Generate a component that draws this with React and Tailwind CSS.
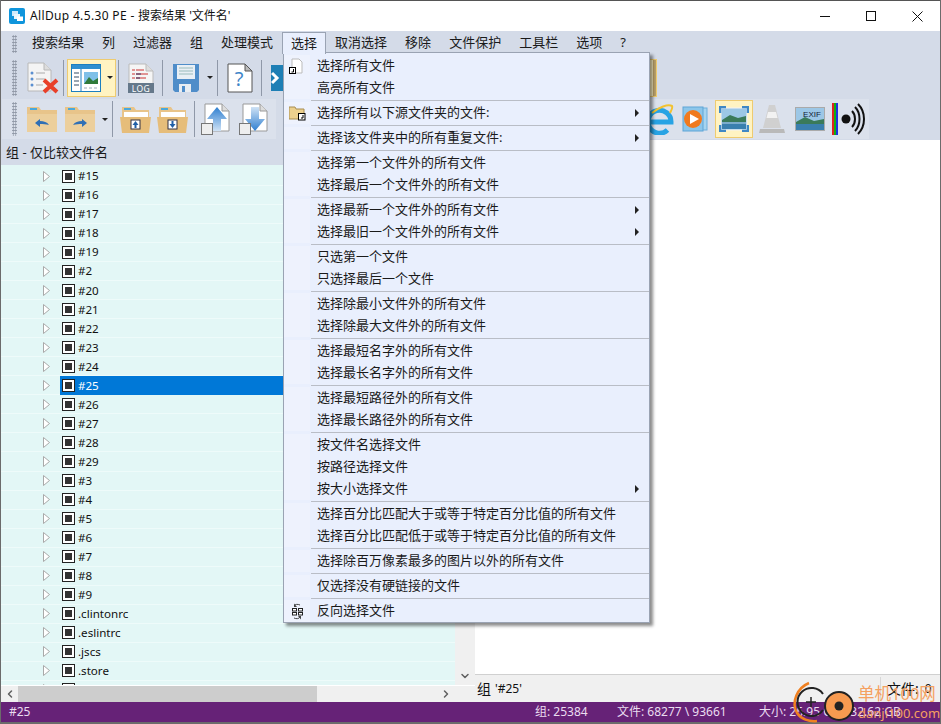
import React from "react";
import { ChevronDown, ChevronLeft, ChevronRight } from "lucide-react";

const FONT = { fontFamily: '"Noto Sans", "Noto Sans CJK SC", sans-serif' };

const menuItems = ["搜索结果", "列", "过滤器", "组", "处理模式", "选择", "取消选择", "移除", "文件保护", "工具栏", "选项", "?"];

const treeRows = [
  "#15", "#16", "#17", "#18", "#19", "#2", "#20", "#21", "#22", "#23", "#24", "#25", "#26", "#27", "#28", "#29",
  "#3", "#4", "#5", "#6", "#7", "#8", "#9", ".clintonrc", ".eslintrc", ".jscs", ".store", "",
];

const menuGroups = [
  [{ t: "选择所有文件", icon: "file" }, { t: "高亮所有文件" }],
  [{ t: "选择所有以下源文件夹的文件:", arrow: true, icon: "folder" }],
  [{ t: "选择该文件夹中的所有重复文件:", arrow: true }],
  [{ t: "选择第一个文件外的所有文件" }, { t: "选择最后一个文件外的所有文件" }],
  [{ t: "选择最新一个文件外的所有文件", arrow: true }, { t: "选择最旧一个文件外的所有文件", arrow: true }],
  [{ t: "只选第一个文件" }, { t: "只选择最后一个文件" }],
  [{ t: "选择除最小文件外的所有文件" }, { t: "选择除最大文件外的所有文件" }],
  [{ t: "选择最短名字外的所有文件" }, { t: "选择最长名字外的所有文件" }],
  [{ t: "选择最短路径外的所有文件" }, { t: "选择最长路径外的所有文件" }],
  [{ t: "按文件名选择文件" }, { t: "按路径选择文件" }, { t: "按大小选择文件", arrow: true }],
  [{ t: "选择百分比匹配大于或等于特定百分比值的所有文件" }, { t: "选择百分比匹配低于或等于特定百分比值的所有文件" }],
  [{ t: "选择除百万像素最多的图片以外的所有文件" }],
  [{ t: "仅选择没有硬链接的文件" }],
  [{ t: "反向选择文件", icon: "invert" }],
];

function Grip({ h = "h-[26px]" }) {
  return (
    <div className={`w-[5px] shrink-0 ${h} bg-[radial-gradient(#8c94a3_0.8px,transparent_1px)] bg-[length:2.5px_3px]`} />
  );
}

function Sep({ className = "" }) {
  return <div className={`h-[36px] w-px shrink-0 bg-[#8f98a8] ${className}`} />;
}

function Caret() {
  return <div className="h-0 w-0 shrink-0 border-x-[3px] border-t-[3px] border-x-transparent border-t-[#222]" />;
}

function AppLogo() {
  return (
    <svg width="16" height="16" viewBox="0 0 16 16">
      <rect width="16" height="16" rx="2" fill="#0f95dc" />
      <rect x="3" y="3" width="6" height="5" fill="#cfeafa" />
      <rect x="5" y="6" width="6" height="5" fill="#e8f6fd" />
      <rect x="8" y="8.5" width="6" height="4.5" fill="#fff" />
    </svg>
  );
}

function ReportDelete() {
  return (
    <svg width="32" height="32" viewBox="0 0 32 32" className="shrink-0">
      <path d="M1 1h16l7 7v21H1z" fill="#f4f4f4" stroke="#b8b8b8" />
      <path d="M17 1v7h7" fill="#ddd" stroke="#b8b8b8" />
      <g fill="#5b8fd0">
        <circle cx="5" cy="11" r="1.5" /><circle cx="5" cy="17" r="1.5" /><circle cx="5" cy="23" r="1.5" />
      </g>
      <path d="M9 11h9M9 17h9M9 23h7" stroke="#aaa" />
      <path d="M17 18l13 12M30 18L17 30" stroke="#e8402a" strokeWidth="4" />
    </svg>
  );
}

function ViewPanes() {
  return (
    <svg width="30" height="28" viewBox="0 0 30 28" className="shrink-0">
      <rect x="0.5" y="0.5" width="29" height="27" fill="#fff" stroke="#1c7fc0" />
      <rect x="1" y="1" width="28" height="4" fill="#2f8fd0" />
      <path d="M10 5v22" stroke="#1c7fc0" />
      <path d="M3 9h5M3 13h5M3 17h5M3 21h5" stroke="#7a8a9a" strokeWidth="1.5" />
      <rect x="13" y="8" width="14" height="12" fill="#7fc0e8" />
      <path d="M13 20l5-7 4 4 5-3v6z" fill="#2f7a3a" />
      <path d="M13 24h14" stroke="#9ab" strokeDasharray="3 2" />
    </svg>
  );
}

function LogDoc() {
  return (
    <svg width="26" height="30" viewBox="0 0 26 30" className="shrink-0">
      <path d="M1 1h17l7 7v21H1z" fill="#f5f5f5" stroke="#bbb" />
      <path d="M18 1v7h7" fill="#ddd" stroke="#bbb" />
      <path d="M4 7h3M8 7h8M4 11h3M8 11h12M4 15h3M8 15h10" stroke="#c33" />
      <path d="M8 11h5M8 15h4" stroke="#336" />
      <rect x="0" y="20" width="26" height="10" fill="#65788a" />
      <text x="13" y="28.5" textAnchor="middle" fontSize="8.5" fill="#fff" letterSpacing="0.5">LOG</text>
    </svg>
  );
}

function Floppy() {
  return (
    <svg width="28" height="28" viewBox="0 0 28 28" className="shrink-0">
      <path d="M1 0h26v26l-2 2H3l-2-2z" fill="#4f8dc9" />
      <rect x="5" y="1" width="18" height="14" fill="#e9eff5" />
      <path d="M7 4h14M7 7h14M7 10h14" stroke="#9bb" />
      <rect x="7" y="20" width="12" height="8" fill="#e8edf2" />
      <rect x="10" y="22" width="3" height="6" fill="#4f8dc9" />
    </svg>
  );
}

function HelpDoc() {
  return (
    <svg width="26" height="30" viewBox="0 0 26 30" className="shrink-0">
      <path d="M1 1h17l7 7v21H1z" fill="#fff" stroke="#555" />
      <path d="M18 1v7h7z" fill="#bbb" stroke="#555" />
      <text x="12" y="23" textAnchor="middle" fontSize="20" fill="#3f86c8">?</text>
    </svg>
  );
}

function BlueTile() {
  return (
    <svg width="12" height="26" viewBox="0 0 12 26" className="shrink-0">
      <path d="M0 0h12v26H0z" fill="#1e7fb5" />
      <path d="M1 8l5 5-5 5" stroke="#fff" strokeWidth="3" fill="none" />
    </svg>
  );
}

function FolderArrow({ dir }) {
  return (
    <svg width="30" height="26" viewBox="0 0 30 26" className="shrink-0">
      <path d="M0 1h12l2 3h16v22H0z" fill="#e8c48a" />
      <rect x="3" y="2" width="7" height="2" fill="#4aa8dc" />
      <path d="M0 8h30v18H0z" fill="#eccf9c" />
      {dir === "back" ? (
        <path d="M8 17l5-4v2c4 0 7 1 9 4-3-1-6-1-9-1v3z" fill="#2f6fb5" />
      ) : (
        <path d="M22 17l-5-4v2c-4 0-7 1-9 4 3-1 6-1 9-1v3z" fill="#2f6fb5" />
      )}
    </svg>
  );
}

function FolderBox({ up }) {
  return (
    <svg width="31" height="27" viewBox="0 0 31 27" className="shrink-0">
      <path d="M2 1h12l2 3h13v8H2z" fill="#e8c48a" />
      <rect x="4" y="2" width="7" height="2" fill="#4aa8dc" />
      <rect x="4" y="6" width="24" height="5" fill="#fff" />
      <path d="M0 11h31l-2 16H2z" fill="#e6bd7a" />
      <rect x="11" y="14" width="9" height="9" fill="#fff" stroke="#334" />
      <path d={up ? "M15.5 15l3 4h-2v3h-2v-3h-2z" : "M15.5 22l3-4h-2v-3h-2v3h-2z"} fill="#1f5fa8" />
    </svg>
  );
}

function DocArrow({ up }) {
  return (
    <svg width="30" height="32" viewBox="0 0 30 32" className="shrink-0">
      <path d="M4 1h17l7 7v20H4z" fill="#fff" stroke="#999" />
      <path d="M21 1v7h7" fill="#ddd" stroke="#999" />
      <defs>
        <linearGradient id={up ? "arrU" : "arrD"} x1="0" y1={up ? "0" : "1"} x2="0" y2={up ? "1" : "0"}>
          <stop offset="0" stopColor="#2f7fd0" />
          <stop offset="1" stopColor="#cfe2f5" />
        </linearGradient>
      </defs>
      <path
        d={up ? "M16 4l10 12h-6v12h-8V16H6z" : "M16 28L26 16h-6V4h-8v12H6z"}
        fill={`url(#${up ? "arrU" : "arrD"})`}
      />
      <rect x="0.5" y="20.5" width="11" height="11" fill="#eee" stroke="#777" />
    </svg>
  );
}

function IeIcon() {
  return (
    <svg width="28" height="31" viewBox="0 0 28 31" className="shrink-0">
      <path d="M3 18h22A11.5 11.5 0 1 0 21.5 26" stroke="#27a3e4" strokeWidth="5" fill="none" />
      <path d="M6 9C13 3 22 0 26 2c1 2-1 5-2 7" stroke="#f2c230" strokeWidth="2" fill="none" />
    </svg>
  );
}

function MediaIcon() {
  return (
    <svg width="26" height="26" viewBox="0 0 26 26" className="shrink-0">
      <rect x="5" y="2" width="20" height="22" fill="#a6d4f0" stroke="#6fb0dc" />
      <rect x="1" y="1" width="20" height="24" fill="#8cc6ea" stroke="#5ea5d6" />
      <circle cx="11" cy="13" r="9" fill="#f07a1e" />
      <path d="M8 8l9 5-9 5z" fill="#fff" />
    </svg>
  );
}

function LandscapeIcon() {
  return (
    <svg width="30" height="26" viewBox="0 0 30 26" className="shrink-0">
      <rect x="2" y="2" width="26" height="22" fill="#9cc7e6" stroke="#f4f4f4" />
      <path d="M3 14l8-5 8 3 8-2v6H3z" fill="#3a7a5a" />
      <path d="M3 16h24v7H3z" fill="#3a7fae" />
      <path d="M3 17h24" stroke="#bcd8e8" />
      <path d="M1 7V1h6M23 1h6v6M1 19v6h6M29 19v6h-6" stroke="#3f88c5" strokeWidth="2.5" fill="none" />
    </svg>
  );
}

function ConeIcon() {
  return (
    <svg width="26" height="30" viewBox="0 0 26 30" className="shrink-0">
      <path d="M10 1h6l6 23H4z" fill="#d0d0d0" />
      <path d="M9 8h8l1.5 6h-11z" fill="#f2f2f2" />
      <path d="M1 25h24l1 4H0z" fill="#b9b9b9" />
    </svg>
  );
}

function ExifIcon() {
  return (
    <svg width="30" height="24" viewBox="0 0 30 24" className="shrink-0">
      <rect x="0.5" y="0.5" width="29" height="23" fill="#9cc7e6" stroke="#aaa" />
      <path d="M1 15l9-5 9 4 10-2v5H1z" fill="#3a7a5a" />
      <path d="M1 17h28v6H1z" fill="#3a7fae" />
      <text x="17" y="10" textAnchor="middle" fontSize="8" fill="#123" fontFamily="Liberation Sans">EXIF</text>
    </svg>
  );
}

function SoundIcon() {
  return (
    <svg width="33" height="32" viewBox="0 0 33 32" className="shrink-0">
      <rect x="0" y="0" width="2" height="32" fill="#e02020" />
      <rect x="2" y="0" width="2" height="32" fill="#10b010" />
      <rect x="4" y="0" width="2" height="32" fill="#2030e0" />
      <circle cx="14" cy="16" r="4.5" fill="#111" />
      <path d="M20 8c4 4 4 12 0 16M23 4c6 6 6 18 0 24M26 1c8 8 8 22 0 30" stroke="#111" strokeWidth="2" fill="none" />
    </svg>
  );
}

function MenuIcon({ type }) {
  if (type === "file") {
    return (
      <svg width="16" height="16" viewBox="0 0 16 16">
        <path d="M3 1h7l3 3v11H3z" fill="#fff" stroke="#bbb" />
        <rect x="0.5" y="9.5" width="6" height="6" fill="#fff" stroke="#000" />
        <path d="M4.5 11v3h-2" stroke="#000" fill="none" />
      </svg>
    );
  }
  if (type === "folder") {
    return (
      <svg width="17" height="16" viewBox="0 0 17 16">
        <path d="M0 2h6l1 2h8v10H0z" fill="#ecd08e" stroke="#a88d50" />
        <rect x="9.5" y="8.5" width="6.5" height="6.5" fill="#fff" stroke="#000" />
        <path d="M14 10v3h-2" stroke="#000" fill="none" />
      </svg>
    );
  }
  return (
    <svg width="13" height="17" viewBox="0 0 13 17">
      <path d="M3 3c1-2 4-2 6-1M9 14c-1 2-4 2-6 1" stroke="#444" fill="none" />
      <path d="M3 0.5v3.5h3zM10 16.500v-3.500H7z" fill="#444" />
      <rect x="1.500" y="5.500" width="4" height="2.500" fill="#fff" stroke="#222" />
      <rect x="7.500" y="5.500" width="4" height="2.500" fill="#fff" stroke="#222" />
      <rect x="1.500" y="9.500" width="4" height="2.500" fill="#fff" stroke="#222" />
      <rect x="7.500" y="9.500" width="4" height="2.500" fill="#fff" stroke="#222" />
    </svg>
  );
}

function SelectMenu() {
  return (
    <div className="absolute left-[282px] top-[52px] w-[367px] border border-[#9aa3b3] bg-[#e9effd] pt-[2px] shadow-[3px_3px_3px_rgba(0,0,0,0.45)]">
      {menuGroups.map((group, i) => (
        <div key={i}>
          {i > 0 && (
            <div className="flex h-[3px] items-center pl-[27px]">
              <div className="h-px flex-1 bg-[#b9bdc6]" />
            </div>
          )}
          {group.map((item) => (
            <div key={item.t} className="flex h-[22px] items-center text-[13px] text-[#1a1a1a]">
              <div className="flex h-full w-[26px] shrink-0 items-center justify-center bg-[#eef2fd]">
                {item.icon && <MenuIcon type={item.icon} />}
              </div>
              <span className="ml-[7px] flex-1 whitespace-nowrap">{item.t}</span>
              {item.arrow && (
                <div className="mr-[10px] h-0 w-0 border-y-[4px] border-l-[4px] border-y-transparent border-l-[#222]" />
              )}
            </div>
          ))}
        </div>
      ))}
    </div>
  );
}

function TreeRow({ name, selected }) {
  return (
    <div className="flex h-[19.04px] shrink-0 items-center border-b border-[#eefbfa] pl-[42px] text-[11.6px]">
      <svg width="7" height="11" viewBox="0 0 7 11" className="shrink-0">
        <path d="M0.5 0.5l6 5-6 5z" fill="#fff" stroke="#a9a9a9" />
      </svg>
      <div className={`ml-[10px] flex h-[19px] flex-1 items-center pl-[2px] ${selected ? "bg-[#0078d7] text-white" : "text-[#111]"}`}>
        <div className="flex h-[13px] w-[13px] items-center justify-center border border-[#222] bg-white">
          <div className="h-[7px] w-[7px] bg-[#333]" />
        </div>
        <span className="ml-[3px]">{name}</span>
      </div>
    </div>
  );
}

function Watermark() {
  return (
    <div className="pointer-events-none absolute bottom-0 left-[790px] h-[44px] w-[150px]">
      <svg width="70" height="44" viewBox="0 0 70 44" className="absolute left-0 top-0">
        <path d="M18 3C6 8 0 22 6 33c4 6 12 9 20 8" stroke="#f08020" strokeWidth="2.5" fill="none" />
        <path d="M32 14A14 14 0 1 0 32 30" fill="none" stroke="#222" strokeWidth="2" />
        <path d="M20 17v10M15 22h10" stroke="#222" strokeWidth="1.5" />
        <circle cx="48" cy="26" r="14" fill="#f79a50" stroke="#222" strokeWidth="2" />
        <circle cx="48" cy="26" r="4.5" fill="#222" />
      </svg>
      <span className="absolute left-[67px] top-[2px] whitespace-nowrap text-[16.5px] leading-[24px] text-[#f5a060]">单机100网</span>
      <span className="absolute left-[67px] top-[24px] whitespace-nowrap text-[13px] leading-[18px] text-[#f5a060]">danji100.com</span>
    </div>
  );
}

export default function App() {
  return (
    <div className="relative flex h-[724px] w-[941px] flex-col overflow-hidden border-x border-[#6b6b6b] bg-white" style={FONT}>
      {/* title bar */}
      <div className="flex h-[31px] shrink-0 items-center border-t border-[#555] bg-white pl-[8px]">
        <AppLogo />
        <span className="ml-[5px] text-[12px] text-[#111]">
          <span className="tracking-[0.34px]">AllDup 4.5.30 PE - </span>搜索结果 '文件名'
        </span>
        <div className="ml-auto flex h-full items-center text-[#111]">
          <div className="flex w-[46px] justify-center"><div className="h-px w-[10px] bg-[#111]" /></div>
          <div className="flex w-[46px] justify-center"><div className="h-[10px] w-[10px] border border-[#111]" /></div>
          <div className="flex w-[46px] justify-center">
            <svg width="11" height="11" viewBox="0 0 11 11"><path d="M0.5 0.5l10 10M10.5 0.5l-10 10" stroke="#111" /></svg>
          </div>
        </div>
      </div>

      {/* menu bar */}
      <div className="flex h-[26px] shrink-0 items-center bg-[#d4dbe8] pl-[11px] text-[13px] text-[#1a1a1a]">
        <Grip h="h-[18px]" />
        <div className="ml-[6px] flex h-full items-center pb-[2px]">
          {menuItems.map((m) =>
            m === "选择" ? (
              <div key={m} className="z-20 flex h-[22px] items-center border border-b-0 border-[#9aa3b3] bg-[#e9effd] px-[8px]">{m}</div>
            ) : (
              <div key={m} className="px-[9px]">{m}</div>
            )
          )}
        </div>
      </div>

      {/* toolbar 1 */}
      <div className="flex h-[41px] shrink-0 items-center bg-[#d4dbe8] pl-[11px]">
        <Grip h="h-[36px]" />
        <div className="ml-[10px]"><ReportDelete /></div>
        <Sep className="ml-[4px] mr-[3px]" />
        <div className="flex h-[38px] w-[49px] shrink-0 items-center gap-[6px] border border-[#eecb70] bg-[#fff3c2] pl-[3px]">
          <ViewPanes />
          <Caret />
        </div>
        <Sep className="ml-[2px] mr-[9px]" />
        <LogDoc />
        <Sep className="ml-[8px] mr-[9px]" />
        <Floppy />
        <div className="ml-[7px]"><Caret /></div>
        <Sep className="ml-[4px] mr-[9px]" />
        <HelpDoc />
        <Sep className="ml-[8px] mr-[9px]" />
        <BlueTile />
        <div className="ml-[367px] h-[38px] w-[7px] shrink-0 border-y border-r border-[#eecb70] bg-[linear-gradient(90deg,#fff3c2_55%,#b9a06a_55%)]" />
      </div>

      {/* toolbar 2 */}
      <div className="flex h-[42px] shrink-0 items-center bg-[#d4dbe8]">
        <div className="ml-px flex h-[40px] w-[274px] shrink-0 items-center bg-[#dbe1ec] pl-[10px]">
          <Grip h="h-[34px]" />
          <div className="ml-[10px]"><FolderArrow dir="back" /></div>
          <div className="ml-[8px]"><FolderArrow dir="forward" /></div>
          <div className="ml-[7px]"><Caret /></div>
          <Sep className="ml-[4px]" />
          <div className="ml-[7px]"><FolderBox up /></div>
          <div className="ml-[6px]"><FolderBox /></div>
          <Sep className="ml-[6px]" />
          <div className="ml-[6px]"><DocArrow up /></div>
          <div className="ml-[8px]"><DocArrow /></div>
        </div>
        <div className="ml-[370px] flex h-[40px] w-[223px] shrink-0 items-center bg-[#dbe1ec]">
          <IeIcon />
          <div className="ml-[8px]"><MediaIcon /></div>
          <div className="ml-[7px] flex h-[38px] w-[38px] shrink-0 items-center justify-center border border-[#eecb70] bg-[#fff3c2]">
            <LandscapeIcon />
          </div>
          <div className="ml-[6px]"><ConeIcon /></div>
          <div className="ml-[10px]"><ExifIcon /></div>
          <div className="ml-[7px]"><SoundIcon /></div>
        </div>
      </div>

      {/* main */}
      <div className="flex min-h-0 flex-1">
        <div className="flex w-[474px] shrink-0 flex-col">
          <div className="flex h-[25px] shrink-0 items-center bg-[#d4dbe8] pl-[5px] text-[13px] text-[#1a1a1a]">组 - 仅比较文件名</div>
          <div className="flex min-h-0 flex-1">
            <div className="flex min-w-0 flex-1 flex-col overflow-hidden bg-[#e3f7f6] pt-[2px]">
              {treeRows.map((r, i) => (
                <TreeRow key={i} name={r} selected={r === "#25"} />
              ))}
            </div>
            <div className="flex w-[20px] shrink-0 flex-col items-center justify-end bg-[#f0f0f0] pb-[3px]">
              <ChevronDown size={12} strokeWidth={3} className="text-[#606060]" />
            </div>
          </div>
          <div className="flex h-[17px] shrink-0 items-center border-t border-white bg-[#f0f0f0]">
            <div className="flex w-[17px] shrink-0 justify-center"><ChevronLeft size={12} strokeWidth={3} className="text-[#606060]" /></div>
            <div className="h-full w-[299px] bg-[#cdcdcd]" />
            <div className="ml-[120px] flex w-[18px] justify-center"><ChevronRight size={12} strokeWidth={3} className="text-[#606060]" /></div>
          </div>
        </div>
        <div className="flex min-w-0 flex-1 flex-col">
          <div className="flex-1 border-b border-[#d0d0d0] bg-white" />
          <div className="flex h-[27px] shrink-0 items-center bg-[#f0f0f0] pl-[2px] text-[#111]">
            <span className="text-[14px]">组</span>
            <span className="ml-[4px] text-[12px]">'#25'</span>
            <div className="ml-auto flex h-[24px] w-[60px] items-center border-l border-[#d8d8d8] pl-[6px] text-[14px]">
              文件: <span className="ml-[6px] text-[12px]">0</span>
            </div>
          </div>
        </div>
      </div>

      {/* status bar */}
      <div className="flex h-[20px] shrink-0 items-center bg-[#662277] pl-[8px] text-[12px] text-[#eadcf0]">
        <span>#25</span>
        <span className="absolute left-[534px]">组: 25384</span>
        <span className="absolute left-[616px]">文件: 68277 \ 93661</span>
        <span className="absolute left-[758px]">大小: 26.95 GB \ 32.62 GB</span>
      </div>
      <div className="h-[2px] shrink-0 bg-[#6b6b6b]" />

      <SelectMenu />
      <Watermark />
    </div>
  );
}
